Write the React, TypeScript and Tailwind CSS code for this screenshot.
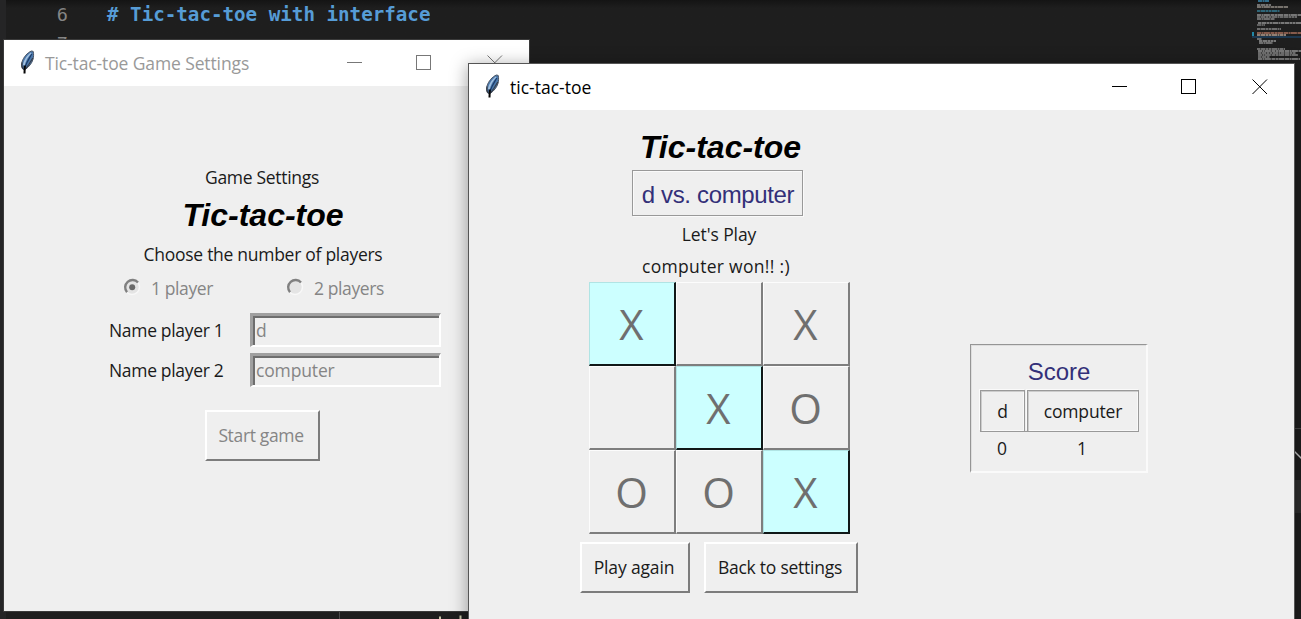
import type { ReactNode } from "react";

const ui = "font-['Open_Sans','Noto_Sans',sans-serif] text-[17.5px] whitespace-nowrap";
const arial = "font-['Liberation_Sans',Arial,sans-serif] whitespace-nowrap";

function Feather() {
  return (
    <svg width="15" height="25" viewBox="0 0 15 25" className="shrink-0">
      <path d="M11.500 1C7.500 2.500 3.500 7 2 12c-.6 2.500-.5 4.500.3 6.500l1.700 1.200 2-.8c3-2.300 5.800-5.500 7-9.500.7-2.800.8-5.500.2-8z" fill="#4a78ab" stroke="#4a5464" strokeWidth="1" />
      <path d="M10.800 2.500C7.500 5 4 9.500 3 14.500l1.500 2C5.500 11 8 6.500 11.500 3.500z" fill="#a3c1e0" />
      <path d="M11.800 4C9.500 8 6.500 12 4.800 18" fill="none" stroke="#1b3a68" strokeWidth="1.100" />
      <path d="M2 12.500c-.5 3-.1 5 1.200 6.500M12.800 8l-4 6.500-3 4" fill="none" stroke="#363b45" strokeWidth="1.100" />
      <path d="M4.800 15.500l-.3 8" stroke="#050505" strokeWidth="2" />
    </svg>
  );
}

function WindowControls({ color }: { color: string }) {
  return (
    <svg width="156" height="16" viewBox="0 0 156 16" fill="none" stroke={color} strokeWidth="1" shapeRendering="crispEdges">
      <path d="M0 7.500h15" />
      <rect x="69.500" y=".5" width="14" height="14" />
      <path d="M140.500.5l14.500 14.500M155 .5l-14.500 14.500" shapeRendering="auto" />
    </svg>
  );
}

function Label({ children, className }: { children: ReactNode; className: string }) {
  return <div className={`flex items-center justify-center ${ui} ${className}`}>{children}</div>;
}

function Radio({ checked }: { checked?: boolean }) {
  return (
    <svg width="18" height="18" viewBox="0 0 18 18" fill="none" className="mb-[2px] shrink-0">
      <circle cx="9" cy="9" r="7.500" fill="#e4e4e4" stroke="#f8f8f8" strokeWidth="1.500" />
      <path d="M4 14.200A7 7 0 0 1 15 4.500" stroke="#808080" strokeWidth="2.400" />
      {checked && <circle cx="9.200" cy="9.200" r="3" fill="#6a6a6a" />}
    </svg>
  );
}

function Entry({ label, value }: { label: string; value: string }) {
  return (
    <div className="flex h-[34px] items-center">
      <span className={`w-[141px] tracking-[-0.32px] text-[#1a1a1a] ${ui}`}>{label}</span>
      <div className="flex h-[34px] w-[191px] border-t-[3px] border-r-2 border-b-2 border-l-[3px] border-t-[#a0a0a0] border-r-white border-b-white border-l-[#a0a0a0]">
        <div className={`flex flex-1 items-center border-t-2 border-l-2 border-[#6e6e6e] pb-[2px] pl-[1px] tracking-[-0.15px] text-[#858585] ${ui}`}>
          {value}
        </div>
      </div>
    </div>
  );
}

function RaisedButton({ children, className }: { children: ReactNode; className: string }) {
  return (
    <button className={`flex h-[51px] items-center justify-center border-2 border-t-white border-r-[#7c7c7c] border-b-[#7c7c7c] border-l-white pr-[2px] ${ui} ${className}`}>
      {children}
    </button>
  );
}

const board = ["X", "", "X", "", "X", "O", "O", "O", "X"];
const winning = [0, 4, 8];

function Cell({ mark, won }: { mark: string; won: boolean }) {
  return (
    <div
      className={`flex items-center justify-center border-t border-r-2 border-b-2 border-l font-['Open_Sans',sans-serif] text-[42px] leading-none text-[#6f6f6f] ${
        won
          ? "border-t-[#b0e4e4] border-r-[#101818] border-b-[#101818] border-l-[#b0e4e4] bg-[#ccffff]"
          : "border-t-[#fcfcfc] border-r-[#7e7e7e] border-b-[#7e7e7e] border-l-[#fcfcfc]"
      }`}
    >
      {mark}
    </div>
  );
}

const minimap: [number, number, number, string][] = [
  [6, 0, 11, "#3b88b0"], [5, 4, 14, "#8f8f8f"], [5, 6, 31, "#958f88"], [5, 10, 23, "#357d95"],
  [5, 14, 44, "#949494"], [5, 16, 40, "#808080"], [5, 18, 18, "#888888"], [6, 22, 43, "#959595"],
  [5, 24, 8, "#777777"], [5, 28, 24, "#888888"], [5, 32, 44, "#a9705c"], [5, 34, 29, "#b6a090"],
  [5, 38, 5, "#888888"], [7, 40, 17, "#959595"], [7, 42, 14, "#888888"], [5, 48, 28, "#888888"],
  [6, 50, 43, "#959595"], [6, 52, 38, "#888888"], [6, 54, 40, "#888888"], [6, 56, 12, "#888888"],
  [6, 58, 42, "#959595"],
];

function Minimap() {
  return (
    <svg width="49" height="64" viewBox="0 0 49 64">
      <rect x="0" y="36" width="49" height="2" fill="#1d3850" />
      <rect x="0" y="32" width="2" height="4" fill="#2187a6" />
      {minimap.map(([x, y, w, c], i) => (
        <path key={i} d={`M${x} ${y + 1}h${w}`} stroke={c} strokeWidth="1.500" strokeDasharray={i % 2 ? "3 .5 5 .5 2 .5" : "4 .5 2 .4 6 .6"} />
      ))}
    </svg>
  );
}

function Editor() {
  return (
    <div className="flex h-full justify-between bg-[#1e1e1e] bg-linear-to-b from-[#141414] to-[#1e1e1e] to-[8px]">
      <div className="flex">
        <div className="h-full w-[6px] bg-[#252526]" />
        <div className="flex h-[40px] flex-col overflow-hidden font-['DejaVu_Sans_Mono',monospace] text-[19.2px] leading-[29px]">
          <div className="flex h-[29px] whitespace-pre">
            <span className="w-[62px] text-right text-[18.500px] text-[#858585]">6</span>
            <span className="pl-[39px] font-bold text-[#569cd6]"># Tic-tac-toe with interface</span>
          </div>
          <span className="w-[62px] text-right text-[18.500px] text-[#858585]">7</span>
        </div>
      </div>
      <svg width="130" height="8" viewBox="0 0 130 8" className="mr-auto -ml-[91px] self-end">
        <path d="M.5 0v8" stroke="#4a4a4a" />
        <path d="M100 5.500v2.500h2v-2.500zM120.500 4.500v3.500h2v-3.500z" fill="#c8c8a8" />
      </svg>
      <div className="flex w-[49px] flex-col">
        <Minimap />
        <svg width="49" height="555" viewBox="0 64 49 555" fill="none">
          <path d="M43 428.500h6" stroke="#454545" />
          <path d="M42 451l8 8" stroke="#c5c5c5" strokeWidth="1.500" />
          <rect x="43" y="480" width="6" height="33" fill="#2d2d2d" />
        </svg>
      </div>
    </div>
  );
}

function SettingsWindow() {
  return (
    <section className="absolute top-[40px] left-[4px] flex h-[571px] w-[525px] flex-col bg-[#efefef] shadow-[0_0_0_1px_#3a3a3a]">
      <header className="flex h-[46px] shrink-0 items-center bg-white pl-[16px]">
        <div className="-mt-[2px] flex"><Feather /></div>
        <h1 className={`flex-1 pl-[10px] tracking-[-0.12px] text-[#999999] ${ui}`}>Tic-tac-toe Game Settings</h1>
        <div className="flex pr-[26px]"><WindowControls color="#777777" /></div>
      </header>
      <main className="flex flex-col items-center pt-[75px] pr-[8px] text-[#1a1a1a]">
        <Label className="h-[32px] pr-px tracking-[-0.3px]">Game Settings</Label>
        <h2 className={`h-[42px] pl-px text-[32px] leading-[44px] font-bold text-black italic ${arial}`}>Tic-tac-toe</h2>
        <Label className="h-[38px] pl-px tracking-[-0.28px]">Choose the number of players</Label>
        <div className="flex h-[30px] w-[279px] items-center text-[#858585]">
          <Radio checked />
          <span className={`w-[145px] pl-[10px] tracking-[-0.4px] ${ui}`}>1 player</span>
          <Radio />
          <span className={`pl-[10px] tracking-[-0.4px] ${ui}`}>2 players</span>
        </div>
        <div className="mt-[10px] ml-[25px] flex flex-col gap-[6px]">
          <Entry label="Name player 1" value="d" />
          <Entry label="Name player 2" value="computer" />
        </div>
        <RaisedButton className="mt-[23px] mr-px w-[115px] tracking-[-0.35px] text-[#858585]">Start game</RaisedButton>
      </main>
    </section>
  );
}

function ScoreBoard() {
  return (
    <div className="mt-[234px] flex h-[129px] w-[178px] flex-col border-t border-r-2 border-b-2 border-l border-t-[#959595] border-r-[#fafafa] border-b-[#fafafa] border-l-[#959595] pt-[8px] pr-[7px] pl-[9px] text-[#1a1a1a] shadow-[inset_1px_1px_0_#dedede]">
      <h3 className={`h-[37px] pr-px text-center text-[24px] leading-[37px] text-[#333079] ${arial}`}>Score</h3>
      <div className="flex h-[42px] gap-[2px] border-b border-[#999999]">
        <Label className="w-[45px] border-t border-r border-l border-[#999999] shadow-[inset_1px_1px_0_#cccccc,inset_-1px_-1px_0_#f8f8f8,-1px_-1px_0_#fafafa]">d</Label>
        <Label className="flex-1 border-t border-r border-l border-[#999999] tracking-[-0.15px] shadow-[inset_1px_1px_0_#cccccc,inset_-1px_-1px_0_#f8f8f8,-1px_-1px_0_#fafafa]">computer</Label>
      </div>
      <div className="flex h-[33px]">
        <Label className="w-[44px]">0</Label>
        <Label className="flex-1 pl-px">1</Label>
      </div>
    </div>
  );
}

function GameWindow() {
  return (
    <section className="absolute top-[64px] left-[469px] flex h-[590px] w-[825px] flex-col bg-[#efefef] shadow-[0_0_0_1px_#555555,0_3px_16px_2px_rgba(0,0,0,0.35)]">
      <header className="flex h-[46px] shrink-0 items-center bg-white pl-[16px]">
        <div className="-mt-[2px] flex"><Feather /></div>
        <h1 className={`flex-1 pl-[10px] text-black ${ui}`}>tic-tac-toe</h1>
        <div className="flex pr-[26px]"><WindowControls color="#000000" /></div>
      </header>
      <main className="flex pl-[111px] text-[#1a1a1a]">
        <div className="flex w-[278px] flex-col items-center pt-[16px]">
          <h2 className={`h-[44px] pl-[3px] text-[32px] leading-[42px] font-bold text-black italic ${arial}`}>Tic-tac-toe</h2>
          <div className="h-[47px] pr-[3px]">
            <div className={`h-[46px] w-[171px] border border-[#999999] pl-px text-center text-[24px] leading-[47px] tracking-[-0.35px] text-[#333079] shadow-[inset_1px_1px_0_#fafafa,1px_1px_0_#fafafa] ${arial}`}>
              d vs. computer
            </div>
          </div>
          <Label className="h-[34px] tracking-[-0.1px]">Let's Play</Label>
          <Label className="h-[31px] pr-[6px] tracking-[0.3px]">computer won!! :)</Label>
          <div className="grid h-[252px] w-[261px] grid-cols-3 grid-rows-3">
            {board.map((mark, i) => (
              <Cell key={i} mark={mark} won={winning.includes(i)} />
            ))}
          </div>
          <div className="mt-[8px] flex gap-[14px]">
            <RaisedButton className="w-[110px] tracking-[-0.15px]">Play again</RaisedButton>
            <RaisedButton className="w-[154px] tracking-[-0.25px]">Back to settings</RaisedButton>
          </div>
        </div>
        <div className="pl-[112px]">
          <ScoreBoard />
        </div>
      </main>
    </section>
  );
}

export default function App() {
  return (
    <div className="relative h-[619px] w-[1301px] overflow-hidden">
      <Editor />
      <SettingsWindow />
      <GameWindow />
    </div>
  );
}
